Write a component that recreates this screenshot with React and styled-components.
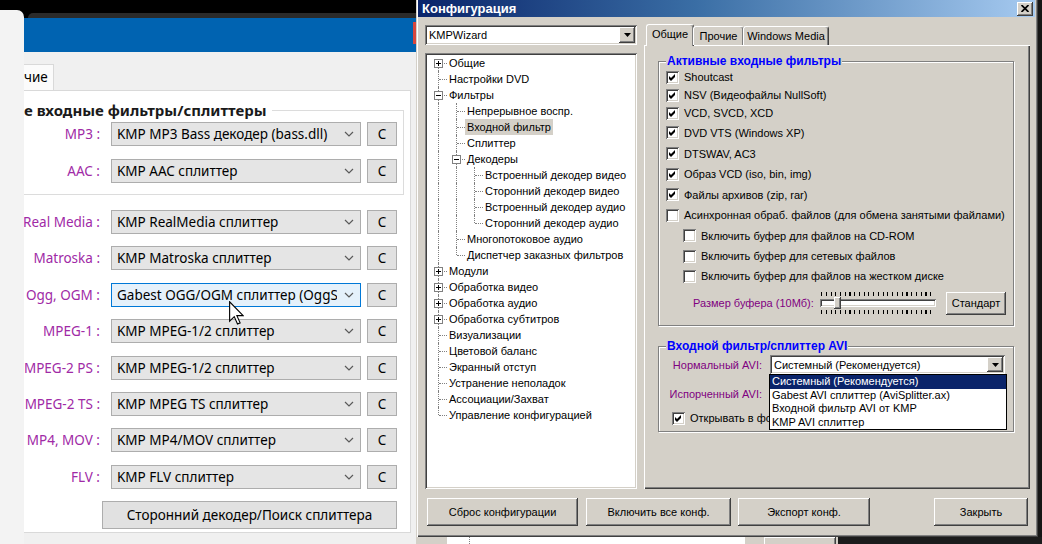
import React from 'react';
import styled, { createGlobalStyle, css } from 'styled-components';

const W10 = `"Noto Sans", "Open Sans", sans-serif`;
const XP = `"Liberation Sans", Arial, sans-serif`;

const GlobalStyle = createGlobalStyle`
  html, body { margin: 0; padding: 0; background: #000; overflow: hidden; }
  * { box-sizing: border-box; }
`;

const raised = css`
  background: #d4d0c8;
  box-shadow: inset -1px -1px #404040, inset 1px 1px #ffffff, inset -2px -2px #808080, inset 2px 2px #d4d0c8;
`;

const sunken = css`
  background: #ffffff;
  box-shadow: inset 1px 1px #808080, inset -1px -1px #ffffff, inset 2px 2px #404040, inset -2px -2px #d4d0c8;
`;

const leftTop = [
  { label: 'MP3 :', value: 'KMP MP3 Bass декодер (bass.dll)' },
  { label: 'AAC :', value: 'KMP AAC сплиттер' },
];

const leftRest = [
  { label: 'Real Media :', value: 'KMP RealMedia сплиттер' },
  { label: 'Matroska :', value: 'KMP Matroska сплиттер' },
  { label: 'Ogg, OGM :', value: 'Gabest OGG/OGM сплиттер (OggS', focus: true },
  { label: 'MPEG-1 :', value: 'KMP MPEG-1/2 сплиттер' },
  { label: 'MPEG-2 PS :', value: 'KMP MPEG-1/2 сплиттер' },
  { label: 'MPEG-2 TS :', value: 'KMP MPEG TS сплиттер' },
  { label: 'MP4, MOV :', value: 'KMP MP4/MOV сплиттер' },
  { label: 'FLV :', value: 'KMP FLV сплиттер' },
];

const rawTree = [
  { t: 'Общие', lvl: 0, exp: '+' },
  { t: 'Настройки DVD', lvl: 0 },
  { t: 'Фильтры', lvl: 0, exp: '-' },
  { t: 'Непрерывное воспр.', lvl: 1 },
  { t: 'Входной фильтр', lvl: 1, sel: true },
  { t: 'Сплиттер', lvl: 1 },
  { t: 'Декодеры', lvl: 1, exp: '-' },
  { t: 'Встроенный декодер видео', lvl: 2 },
  { t: 'Сторонний декодер видео', lvl: 2 },
  { t: 'Встроенный декодер аудио', lvl: 2 },
  { t: 'Сторонний декодер аудио', lvl: 2 },
  { t: 'Многопотоковое аудио', lvl: 1 },
  { t: 'Диспетчер заказных фильтров', lvl: 1 },
  { t: 'Модули', lvl: 0, exp: '+' },
  { t: 'Обработка видео', lvl: 0, exp: '+' },
  { t: 'Обработка аудио', lvl: 0, exp: '+' },
  { t: 'Обработка субтитров', lvl: 0, exp: '+' },
  { t: 'Визуализации', lvl: 0 },
  { t: 'Цветовой баланс', lvl: 0 },
  { t: 'Экранный отступ', lvl: 0 },
  { t: 'Устранение неполадок', lvl: 0 },
  { t: 'Ассоциации/Захват', lvl: 0 },
  { t: 'Управление конфигурацией', lvl: 0 },
];

const tree = rawTree.map((n, i) => {
  const hasNextAt = (lvl) => {
    for (let j = i + 1; j < rawTree.length; j++) {
      if (rawTree[j].lvl < lvl) return false;
      if (rawTree[j].lvl === lvl) return true;
    }
    return false;
  };
  const guides = [];
  for (let l = 0; l < n.lvl; l++) guides.push(hasNextAt(l));
  return { ...n, guides, hasNext: hasNextAt(n.lvl), first: i === 0 };
});

const filters = [
  { t: 'Shoutcast', on: true, h: 18 },
  { t: 'NSV (Видеофайлы NullSoft)', on: true, h: 18 },
  { t: 'VCD, SVCD, XCD', on: true, h: 18 },
  { t: 'DVD VTS (Windows XP)', on: true, h: 21 },
  { t: 'DTSWAV, AC3', on: true, h: 21 },
  { t: 'Образ VCD (iso, bin, img)', on: true, h: 20 },
  { t: 'Файлы архивов (zip, rar)', on: true, h: 21 },
  { t: 'Асинхронная обраб. файлов (для обмена занятыми файлами)', h: 20 },
  { t: 'Включить буфер для файлов на CD-ROM', h: 21, sub: true },
  { t: 'Включить буфер для сетевых файлов', h: 20, sub: true },
  { t: 'Включить буфер для файлов на жестком диске', h: 20, sub: true },
];

const aviOptions = [
  'Системный (Рекомендуется)',
  'Gabest AVI сплиттер (AviSplitter.ax)',
  'Входной фильтр AVI от KMP',
  'KMP AVI сплиттер',
];

/* ---------- left window (Windows 10 style) ---------- */

const Screen = styled.div`
  position: relative;
  width: 1042px;
  height: 544px;
  display: flex;
  overflow: hidden;
  background: #000;
`;

const LeftPane = styled.div`
  width: 416px;
  flex: none;
  display: flex;
  background: #000;
`;

const SideStrip = styled.div`
  width: 24px;
  flex: none;
  margin-top: 10px;
  background: #f3f3f3;
  border-top-right-radius: 7px;
`;

const W10Window = styled.div`
  flex: 1;
  display: flex;
  flex-direction: column;
  background: #f0f0f0;
  font-family: ${W10};
  font-size: 13.5px;
  color: #000;
`;

const TopDark = styled.div`
  height: 18px;
  flex: none;
  background: #000;
  padding: 13px 0 0 4px;
`;

const DarkTab = styled.div`
  height: 5px;
  background: #2b2b2b;
  border-top-left-radius: 5px;
`;

const W10Title = styled.div`
  height: 34px;
  flex: none;
  background: #0063b1;
  display: flex;
  justify-content: flex-end;
`;

const CloseSliver = styled.div`
  width: 3px;
  height: 22px;
  margin-top: 4px;
  background: #d8473d;
`;

const W10TabStrip = styled.div`
  height: 38px;
  flex: none;
  display: flex;
  align-items: flex-end;
`;

const W10Tab = styled.div`
  width: 30px;
  height: 26px;
  background: #fbfbfb;
  border: 1px solid #d9d9d9;
  border-left: none;
  border-bottom: none;
  line-height: 25px;
  white-space: nowrap;
`;

const W10Panel = styled.div`
  flex: 1;
  background: #fff;
  border: 1px solid #d9d9d9;
  border-left: none;
  margin: 0 5px 11px 0;
  padding-top: 9px;
`;

const Group = styled.fieldset`
  margin: 0 6px 0 0;
  padding: 0 0 11px;
  border: 1px solid #dcdcdc;
  border-left: none;
  min-width: 0;
`;

const GroupLegend = styled.legend`
  padding: 0 5px 0 0;
  font-weight: 700;
  font-size: 15px;
  line-height: 20px;
  color: #1a1a1a;
  white-space: nowrap;
`;

const Rows = styled.div`
  display: flex;
  flex-direction: column;
  gap: ${(p) => p.$gap}px;
  margin-top: ${(p) => p.$top}px;
`;

const Row = styled.div`
  display: flex;
  align-items: center;
  height: 24px;
`;

const Label = styled.div`
  width: 80px;
  flex: none;
  display: flex;
  justify-content: flex-end;
  overflow: hidden;
  white-space: nowrap;
  padding-right: 4px;
  color: #a02aa6;
`;

const Combo = styled.div`
  margin-left: 7px;
  width: 250px;
  height: 24px;
  display: flex;
  align-items: center;
  padding: 0 6px 0 5px;
  border: 1px solid ${(p) => (p.$focus ? '#0078d7' : '#adadad')};
  background: ${(p) => (p.$focus ? '#e5f1fb' : '#e5e5e5')};
`;

const ComboText = styled.span`
  flex: 1;
  overflow: hidden;
  white-space: nowrap;
`;

const Chevron = styled.svg`
  flex: none;
  margin-left: 7px;
`;

const CButton = styled.div`
  margin-left: 6px;
  width: 30px;
  height: 24px;
  display: flex;
  align-items: center;
  justify-content: center;
  background: #e1e1e1;
  border: 1px solid #adadad;
`;

const BigButton = styled.div`
  margin: 12px 0 0 78px;
  width: 295px;
  height: 28px;
  display: flex;
  align-items: center;
  justify-content: center;
  background: #e1e1e1;
  border: 1px solid #adadad;
`;

const Cursor = styled.svg`
  position: absolute;
  left: 229px;
  top: 301px;
`;

/* ---------- right dialog (classic style) ---------- */

const RightPane = styled.div`
  flex: 1;
  display: flex;
  flex-direction: column;
`;

const DialogRow = styled.div`
  display: flex;
  height: 537px;
  flex: none;
`;

const Dialog = styled.div`
  width: 622px;
  flex: none;
  display: flex;
  flex-direction: column;
  background: #d4d0c8;
  padding: 0 3px 3px 2px;
  box-shadow: inset 1px 0 #d4d0c8, inset 2px 0 #ffffff, inset -1px -1px #404040, inset -2px -2px #808080;
  font-family: ${XP};
  font-size: 11px;
  color: #000;
`;

const DarkEdge = styled.div`
  flex: 1;
  background: #161616;
`;

const TitleBar = styled.div`
  height: 17px;
  flex: none;
  display: flex;
  align-items: center;
  padding: 0 2px 0 2px;
  background: linear-gradient(90deg, #0a246a 0%, #3a6ea5 45%, #a6caf0 100%);
`;

const TitleText = styled.span`
  margin-left: 2px;
  color: #fff;
  font-weight: 700;
  font-size: 13px;
`;

const CloseBtn = styled.div`
  ${raised};
  margin-left: auto;
  width: 16px;
  height: 14px;
  display: flex;
  align-items: center;
  justify-content: center;
`;

const Body = styled.div`
  display: flex;
  gap: 7px;
  padding: 7px 5px 0 7px;
`;

const LeftCol = styled.div`
  width: 212px;
  flex: none;
  padding-top: 1px;
  display: flex;
  flex-direction: column;
  gap: 8px;
`;

const XPCombo = styled.div`
  ${sunken};
  position: relative;
  width: ${(p) => p.$w}px;
  height: ${(p) => p.$h}px;
  margin-left: ${(p) => p.$ml || 0}px;
  display: flex;
  align-items: center;
  padding: 2px 2px 2px 4px;
  white-space: nowrap;
`;

const XPComboText = styled.span`
  flex: 1;
`;

const DropBtn = styled.div`
  ${raised};
  width: 16px;
  height: 100%;
  display: flex;
  align-items: center;
  justify-content: center;
`;

const TreeBox = styled.div`
  ${sunken};
  width: 212px;
  height: 436px;
  padding: 2px 0 0 4px;
  overflow: hidden;
`;

const TreeRowBox = styled.div`
  display: flex;
  height: 16px;
  line-height: 16px;
  white-space: nowrap;
`;

const Guide = styled.div`
  position: relative;
  width: 18px;
  flex: none;
  ${(p) =>
    p.$line &&
    css`
      &::before {
        content: '';
        position: absolute;
        left: 9px;
        top: 0;
        bottom: 0;
        border-left: 1px dotted #808080;
      }
    `}
`;

const Joint = styled.div`
  position: relative;
  width: 18px;
  flex: none;
  &::before {
    content: '';
    position: absolute;
    left: 9px;
    top: ${(p) => (p.$up ? 0 : 8)}px;
    bottom: ${(p) => (p.$down ? 0 : 8)}px;
    border-left: 1px dotted #808080;
  }
  &::after {
    content: '';
    position: absolute;
    left: 10px;
    right: 0;
    top: 8px;
    border-top: 1px dotted #808080;
  }
`;

const Expander = styled.svg`
  position: absolute;
  left: 5px;
  top: 4px;
  z-index: 1;
`;

const NodeText = styled.span`
  padding: 0 2px;
  background: ${(p) => (p.$selected ? '#d4d0c8' : 'transparent')};
`;

const RightCol = styled.div`
  width: 386px;
  flex: none;
  display: flex;
  flex-direction: column;
`;

const TabRow = styled.div`
  position: relative;
  z-index: 1;
  height: 21px;
  display: flex;
  align-items: flex-end;
  padding-left: 2px;
`;

const Tab = styled.div`
  width: ${(p) => p.$w}px;
  height: ${(p) => (p.$active ? 22 : 19)}px;
  margin-bottom: ${(p) => (p.$active ? -1 : 0)}px;
  margin-left: ${(p) => (p.$active ? 0 : -1)}px;
  padding-top: 3px;
  text-align: center;
  background: #d4d0c8;
  border-top: 1px solid #fff;
  border-left: 1px solid #fff;
  border-right: 1px solid #404040;
  border-radius: 3px 3px 0 0;
  box-shadow: inset -1px 0 #808080;
  white-space: nowrap;
`;

const TabPanel = styled.div`
  height: 444px;
  background: #d4d0c8;
  box-shadow: inset 1px 1px #fff, inset -1px -1px #404040, inset -2px -2px #808080;
  padding: 9px 16px 0 14px;
`;

const XPGroup = styled.fieldset`
  margin: ${(p) => p.$mt || 0}px 0 0;
  padding: 0 0 ${(p) => p.$pb}px 7px;
  border: 1px solid #808080;
  box-shadow: inset 1px 1px #fff, 1px 1px #fff;
  min-width: 0;
`;

const XPLegend = styled.legend`
  padding: 0 1px;
  background: #d4d0c8;
  color: #0000ff;
  font-weight: 700;
  font-size: 12px;
  line-height: 14px;
`;

const CheckRow = styled.div`
  display: flex;
  align-items: center;
  height: ${(p) => p.$h}px;
  margin-top: ${(p) => p.$mt || 0}px;
  padding-left: ${(p) => p.$indent || 0}px;
  white-space: nowrap;
`;

const Box = styled.div`
  ${sunken};
  width: 13px;
  height: 13px;
  flex: none;
  margin-right: 5px;
`;

const SliderRow = styled.div`
  display: flex;
  align-items: center;
  height: 24px;
  margin-top: 5px;
  padding-left: 27px;
`;

const PurpleLabel = styled.span`
  width: ${(p) => p.$w}px;
  flex: none;
  color: #800080;
  text-align: ${(p) => p.$align || 'left'};
  white-space: nowrap;
`;

const Slider = styled.div`
  width: 120px;
  height: 24px;
  display: flex;
  flex-direction: column;
  justify-content: space-between;
  padding: 1px 0;
`;

const Ticks = styled.div`
  height: 4px;
  margin: 0 3px;
  background: repeating-linear-gradient(90deg, #000 0 1px, transparent 1px 4.75px);
`;

const Track = styled.div`
  ${sunken};
  position: relative;
  height: 8px;
  margin: 0 2px;
`;

const Thumb = styled.div`
  ${raised};
  position: absolute;
  left: 14px;
  top: -2px;
  width: 7px;
  height: 12px;
`;

const XPButton = styled.div`
  ${raised};
  width: ${(p) => p.$w}px;
  height: ${(p) => p.$h}px;
  margin-left: ${(p) => (p.$auto ? 'auto' : `${p.$ml || 0}px`)};
  flex: none;
  display: flex;
  align-items: center;
  justify-content: center;
  white-space: nowrap;
`;

const AviRow = styled.div`
  display: flex;
  align-items: center;
  height: 19px;
  margin-top: ${(p) => p.$mt}px;
`;

const DropList = styled.div`
  position: absolute;
  left: -1px;
  top: 19px;
  width: 238px;
  border: 1px solid #000;
  background: #fff;
  z-index: 2;
`;

const DropItem = styled.div`
  height: 13.5px;
  line-height: 13.5px;
  padding-left: 2px;
  background: ${(p) => (p.$sel ? '#0a246a' : '#fff')};
  color: ${(p) => (p.$sel ? '#fff' : '#000')};
  white-space: nowrap;
`;

const ButtonRow = styled.div`
  display: flex;
  padding: 9px 7px 0 9px;
`;

const BottomStrip = styled.div`
  height: 7px;
  display: flex;
  overflow: hidden;
  font-family: ${XP};
`;

const StripCell = styled.div`
  width: ${(p) => p.$w}px;
  flex: ${(p) => (p.$w ? 'none' : 1)};
  background: ${(p) => p.$bg};
  position: relative;
  display: flex;
  padding-left: ${(p) => p.$pl || 0}px;
`;

const DottedLine = styled.div`
  margin-left: 22px;
  border-left: 1px dotted #808080;
`;

const DeleteBtn = styled.div`
  ${raised};
  width: 72px;
  height: 20px;
  padding-top: 4px;
  text-align: center;
  font-size: 13px;
  font-weight: 700;
  color: #222;
`;

const CheckMark = () => (
  <svg width="13" height="13" viewBox="0 0 13 13">
    <path d="M3 5 L5 7 L9 3 L9 6 L5 10 L3 8 Z" fill="#000" />
  </svg>
);

const DownTri = () => (
  <svg width="7" height="4" viewBox="0 0 7 4">
    <polygon points="0,0 7,0 3.5,4" fill="#000" />
  </svg>
);

const FilterRow = ({ label, value, focus }) => (
  <Row>
    <Label>{label}</Label>
    <Combo $focus={focus}>
      <ComboText>{value}</ComboText>
      <Chevron width="10" height="6" viewBox="0 0 10 6">
        <polyline points="1,1 5,5 9,1" fill="none" stroke="#5a5a5a" strokeWidth="1.2" />
      </Chevron>
    </Combo>
    <CButton>C</CButton>
  </Row>
);

const TreeRow = ({ node }) => (
  <TreeRowBox>
    {node.guides.map((g, i) => (
      <Guide key={i} $line={g} />
    ))}
    <Joint $up={!node.first} $down={node.hasNext}>
      {node.exp && (
        <Expander width="9" height="9" viewBox="0 0 9 9" shapeRendering="crispEdges">
          <rect x="0.5" y="0.5" width="8" height="8" fill="#fff" stroke="#808080" />
          <line x1="2" y1="4.5" x2="7" y2="4.5" stroke="#000" />
          {node.exp === '+' && <line x1="4.5" y1="2" x2="4.5" y2="7" stroke="#000" />}
        </Expander>
      )}
    </Joint>
    <NodeText $selected={node.sel}>{node.t}</NodeText>
  </TreeRowBox>
);

export default function App() {
  return (
    <>
      <GlobalStyle />
      <Screen>
        <LeftPane>
          <SideStrip />
          <W10Window>
            <TopDark>
              <DarkTab />
            </TopDark>
            <W10Title>
              <CloseSliver />
            </W10Title>
            <W10TabStrip>
              <W10Tab>чие</W10Tab>
            </W10TabStrip>
            <W10Panel>
              <Group>
                <GroupLegend>е входные фильтры/сплиттеры</GroupLegend>
                <Rows $gap={13} $top={2}>
                  {leftTop.map((r) => (
                    <FilterRow key={r.label} {...r} />
                  ))}
                </Rows>
              </Group>
              <Rows $gap={12.4} $top={15}>
                {leftRest.map((r) => (
                  <FilterRow key={r.label} {...r} />
                ))}
              </Rows>
              <BigButton>Сторонний декодер/Поиск сплиттера</BigButton>
            </W10Panel>
          </W10Window>
        </LeftPane>

        <RightPane>
          <DialogRow>
            <Dialog>
              <TitleBar>
                <TitleText>Конфигурация</TitleText>
                <CloseBtn>
                  <svg width="8" height="7" viewBox="0 0 8 7">
                    <path d="M0.5 0 L7.5 7 M7.5 0 L0.5 7" stroke="#000" strokeWidth="1.7" />
                  </svg>
                </CloseBtn>
              </TitleBar>

              <Body>
                <LeftCol>
                  <XPCombo $w={212} $h={20}>
                    <XPComboText>KMPWizard</XPComboText>
                    <DropBtn>
                      <DownTri />
                    </DropBtn>
                  </XPCombo>
                  <TreeBox>
                    {tree.map((n) => (
                      <TreeRow key={n.t} node={n} />
                    ))}
                  </TreeBox>
                </LeftCol>

                <RightCol>
                  <TabRow>
                    <Tab $w={48} $active>Общие</Tab>
                    <Tab $w={51}>Прочие</Tab>
                    <Tab $w={86}>Windows Media</Tab>
                  </TabRow>
                  <TabPanel>
                    <XPGroup $pb={10}>
                      <XPLegend>Активные входные фильтры</XPLegend>
                      {filters.map((f) => (
                        <CheckRow key={f.t} $h={f.h} $indent={f.sub ? 17 : 0}>
                          <Box>{f.on && <CheckMark />}</Box>
                          {f.t}
                        </CheckRow>
                      ))}
                      <SliderRow>
                        <PurpleLabel $w={125}>Размер буфера (10Мб):</PurpleLabel>
                        <Slider>
                          <Ticks />
                          <Track>
                            <Thumb />
                          </Track>
                          <Ticks />
                        </Slider>
                        <XPButton $w={60} $h={23} $ml={8}>
                          Стандарт
                        </XPButton>
                      </SliderRow>
                    </XPGroup>

                    <XPGroup $mt={13} $pb={6}>
                      <XPLegend>Входной фильтр/сплиттер AVI</XPLegend>
                      <AviRow $mt={2}>
                        <PurpleLabel $w={96} $align="right">
                          Нормальный AVI:
                        </PurpleLabel>
                        <XPCombo $w={235} $h={19} $ml={8}>
                          <XPComboText>Системный (Рекомендуется)</XPComboText>
                          <DropBtn>
                            <DownTri />
                          </DropBtn>
                          <DropList>
                            {aviOptions.map((o, i) => (
                              <DropItem key={o} $sel={i === 0}>
                                {o}
                              </DropItem>
                            ))}
                          </DropList>
                        </XPCombo>
                      </AviRow>
                      <AviRow $mt={10}>
                        <PurpleLabel $w={96} $align="right">
                          Испорченный AVI:
                        </PurpleLabel>
                      </AviRow>
                      <CheckRow $h={14} $mt={8} $indent={6}>
                        <Box>
                          <CheckMark />
                        </Box>
                        Открывать в фо
                      </CheckRow>
                    </XPGroup>
                  </TabPanel>
                </RightCol>
              </Body>

              <ButtonRow>
                <XPButton $w={151} $h={28}>Сброс конфигурации</XPButton>
                <XPButton $w={145} $h={28} $ml={8}>Включить все конф.</XPButton>
                <XPButton $w={132} $h={28} $ml={7}>Экспорт конф.</XPButton>
                <XPButton $w={94} $h={28} $auto>Закрыть</XPButton>
              </ButtonRow>
            </Dialog>
            <DarkEdge />
          </DialogRow>

          <BottomStrip>
            <StripCell $w={31} $bg="#d4d0c8" />
            <StripCell $w={298} $bg="#ffffff">
              <DottedLine />
            </StripCell>
            <StripCell $w={93} $bg="#d4d0c8" $pl={19}>
              <DeleteBtn>Удалить</DeleteBtn>
            </StripCell>
            <StripCell $bg="#1c1c1c" />
          </BottomStrip>
        </RightPane>

        <Cursor width="15" height="24" viewBox="0 0 12 19">
          <path
            d="M0.5 0.5 L0.5 16 L4.2 12.4 L6.8 18.3 L8.9 17.4 L6.3 11.6 L11.3 11.6 Z"
            fill="#fff"
            stroke="#000"
            strokeWidth="0.9"
          />
        </Cursor>
      </Screen>
    </>
  );
}
